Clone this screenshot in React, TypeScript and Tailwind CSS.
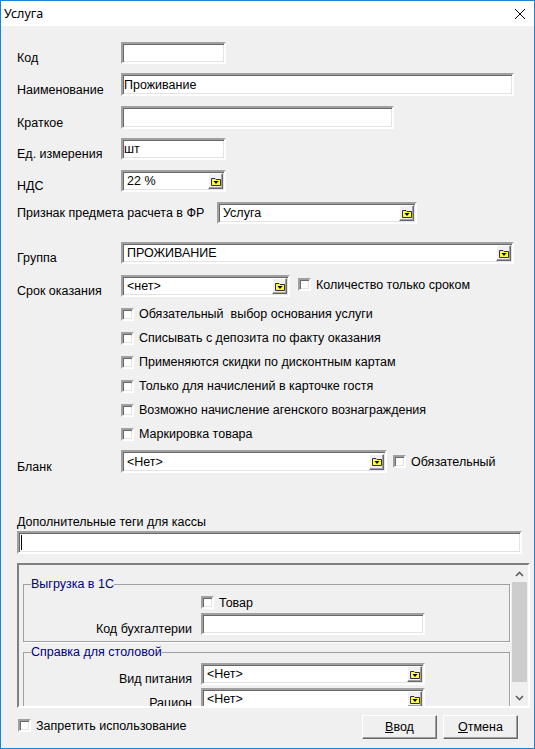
import type { ReactNode } from "react";

/**
 * ServiceDialog — the classic WinForms "Услуга" editor. Every control uses the
 * old 3D look: sunken 2px frames for edits/combos/checks, raised 2px frames
 * for buttons, etched group boxes inside a scrolled panel at the bottom.
 */

// Sunken frame: outer grey + inner dark on top/left, white + light on bottom/right.
const sunken =
  "border-2 border-t-[#a0a0a0] border-l-[#a0a0a0] border-r-white border-b-white shadow-[inset_1px_1px_0_#696969,inset_-1px_-1px_0_#e3e3e3] bg-white";

// Raised frame for buttons.
const raised =
  "border-t border-l border-r border-b border-t-white border-l-white border-r-[#696969] border-b-[#696969] shadow-[inset_-1px_-1px_0_#a0a0a0] bg-[#f0f0f0]";

function Edit({ className, children }: { className: string; children?: ReactNode }) {
  return (
    <div className={`${sunken} flex shrink-0 items-center pl-[1px] ${className}`}>
      {children}
    </div>
  );
}

function DropIcon() {
  return (
    <svg width="10" height="9" viewBox="0 0 10 9" aria-hidden="true">
      <path d="M0.5 1.5h3.5l1 1h4.5v6h-9z" fill="#ffff40" stroke="#303030" />
      <path d="M2.5 4h5l-2.5 3z" fill="#000" />
    </svg>
  );
}

function Combo({ className, value }: { className: string; value: string }) {
  return (
    <div className={`${sunken} flex shrink-0 items-center pl-[4px] pr-[1px] ${className}`}>
      <span className="flex-1 truncate">{value}</span>
      <span className={`${raised} flex h-[16px] w-[15px] shrink-0 items-center justify-center`}>
        <DropIcon />
      </span>
    </div>
  );
}

function Check() {
  return <span className={`${sunken} block h-[13px] w-[13px] shrink-0`} />;
}

function CheckLabel({ children }: { children: ReactNode }) {
  return (
    <span className="inline-flex items-center gap-[5px] whitespace-nowrap">
      <Check />
      {children}
    </span>
  );
}

// A form row: fixed label column (104px) + control, label sits on the bottom edge.
function Row({
  label,
  className,
  children,
}: {
  label: string;
  className: string;
  children: ReactNode;
}) {
  return (
    <div className={`flex items-end ${className}`}>
      <span className="-mb-[1px] w-[104px] shrink-0 whitespace-nowrap">{label}</span>
      {children}
    </div>
  );
}

function GroupBox({
  title,
  className,
  children,
}: {
  title: string;
  className: string;
  children: ReactNode;
}) {
  return (
    <fieldset className={`border border-[#a0a0a0] shadow-[1px_1px_0_#fff] ${className}`}>
      <legend className="ml-[7px] leading-[14px] text-[#000080]">{title}</legend>
      {children}
    </fieldset>
  );
}

function ScrollArrow({ up }: { up?: boolean }) {
  return (
    <div className="flex h-[17px] w-[17px] shrink-0 items-center justify-center">
      <svg width="9" height="6" viewBox="0 0 9 6" aria-hidden="true">
        <polyline
          points={up ? "1,5 4.5,1.5 8,5" : "1,1 4.5,4.5 8,1"}
          fill="none"
          stroke="#606060"
          strokeWidth="1.6"
        />
      </svg>
    </div>
  );
}

const checks = [
  "Обязательный  выбор основания услуги",
  "Списывать с депозита по факту оказания",
  "Применяются скидки по дисконтным картам",
  "Только для начислений в карточке гостя",
  "Возможно начисление агенского вознаграждения",
  "Маркировка товара",
];

export default function App() {
  return (
    <div className="flex h-[749px] w-[535px] flex-col overflow-hidden border border-[#1883d7] bg-[#f0f0f0] font-['Liberation_Sans',Arial,sans-serif] text-[12.5px] leading-[14px] text-black">
      {/* Title bar */}
      <div className="flex h-[25px] shrink-0 items-center justify-between bg-white pl-[3px] pr-[9px]">
        <span className="font-['Noto_Sans',sans-serif] text-[12.5px]">Услуга</span>
        <svg width="10" height="10" viewBox="0 0 10 10" aria-hidden="true">
          <path d="M0 0L10 10M10 0L0 10" stroke="#000" strokeWidth="1" />
        </svg>
      </div>

      <div className="flex flex-col pl-[16px] [&_span]:whitespace-pre">
        <Row label="Код" className="mt-[16px]">
          <Edit className="h-[22px] w-[105px]" />
        </Row>
        <Row label="Наименование" className="mt-[9px]">
          <Edit className="h-[23px] w-[393px]">Проживание</Edit>
        </Row>
        <Row label="Краткое" className="mt-[10px]">
          <Edit className="h-[23px] w-[273px]" />
        </Row>
        <Row label="Ед. измерения" className="mt-[9px]">
          <Edit className="h-[22px] w-[105px]">шт</Edit>
        </Row>
        <Row label="НДС" className="mt-[10px]">
          <Combo className="h-[22px] w-[105px]" value="22 %" />
        </Row>

        <div className="mt-[10px] flex items-center">
          <span className="w-[200px] shrink-0">Признак предмета расчета в ФР</span>
          <Combo className="h-[22px] w-[200px]" value="Услуга" />
        </div>

        <Row label="Группа" className="mt-[18px]">
          <Combo className="h-[22px] w-[393px]" value="ПРОЖИВАНИЕ" />
        </Row>
        <Row label="Срок оказания" className="mt-[11px]">
          <Combo className="h-[22px] w-[169px]" value="<нет>" />
          <span className="mb-[3px] ml-[8px]">
            <CheckLabel>Количество только сроком</CheckLabel>
          </span>
        </Row>

        {/* Service flags */}
        <div className="mt-[5px] flex flex-col pl-[104px]">
          {checks.map((c) => (
            <div key={c} className="flex h-[24px] items-center">
              <CheckLabel>{c}</CheckLabel>
            </div>
          ))}
        </div>

        <Row label="Бланк" className="mt-[4px]">
          <Combo className="h-[23px] w-[266px]" value="<Нет>" />
          <span className="mb-[2px] ml-[6px]">
            <CheckLabel>Обязательный</CheckLabel>
          </span>
        </Row>

        <span className="mt-[42px]">Дополнительные теги для кассы</span>
        <Edit className="mt-[2px] h-[23px] w-[505px]">
          <span className="ml-[1px] h-[15px] w-[1px] bg-black" />
        </Edit>

        {/* Scrolled panel with the accounting / canteen groups */}
        <div className="mt-[9px] flex h-[145px] w-[513px] border-2 border-t-[#808080] border-l-[#808080] border-r-white border-b-white">
          <div className="flex flex-1 flex-col overflow-hidden pl-[4px] pr-[1px]">
            <GroupBox title="Выгрузка в 1С" className="mt-[12px] pb-[6px]">
              <div className="mt-[5px] flex h-[13px] items-center pl-[177px]">
                <CheckLabel>Товар</CheckLabel>
              </div>
              <div className="mt-[4px] flex items-end gap-[9px]">
                <span className="-mb-[1px] w-[168px] shrink-0 text-right">Код бухгалтерии</span>
                <Edit className="h-[22px] w-[224px]" />
              </div>
            </GroupBox>
            <GroupBox title="Справка для столовой" className="mt-[3px] pb-[6px]">
              <div className="mt-[4px] flex items-end gap-[9px]">
                <span className="-mb-[1px] w-[168px] shrink-0 text-right">Вид питания</span>
                <Combo className="h-[22px] w-[224px]" value="<Нет>" />
              </div>
              <div className="mt-[3px] flex items-end gap-[9px]">
                <span className="w-[168px] shrink-0 text-right">Рацион</span>
                <Combo className="h-[22px] w-[224px]" value="<Нет>" />
              </div>
            </GroupBox>
          </div>
          <div className="flex w-[17px] shrink-0 flex-col bg-[#f0f0f0]">
            <ScrollArrow up />
            <div className="mx-[1px] h-[100px] bg-[#cdcdcd]" />
            <div className="flex-1" />
            <ScrollArrow />
          </div>
        </div>

        {/* Footer */}
        <div className="mt-[7px] flex h-[24px] items-center pr-[16px]">
          <span className="ml-[1px]">
            <CheckLabel>Запретить использование</CheckLabel>
          </span>
          <div className="ml-auto flex gap-[6px]">
            <button className={`${raised} h-[24px] w-[75px] text-[12.5px]`}>
              <span className="underline">В</span>вод
            </button>
            <button className={`${raised} h-[24px] w-[75px] text-[12.5px]`}>
              <span className="underline">О</span>тмена
            </button>
          </div>
        </div>
      </div>
    </div>
  );
}
